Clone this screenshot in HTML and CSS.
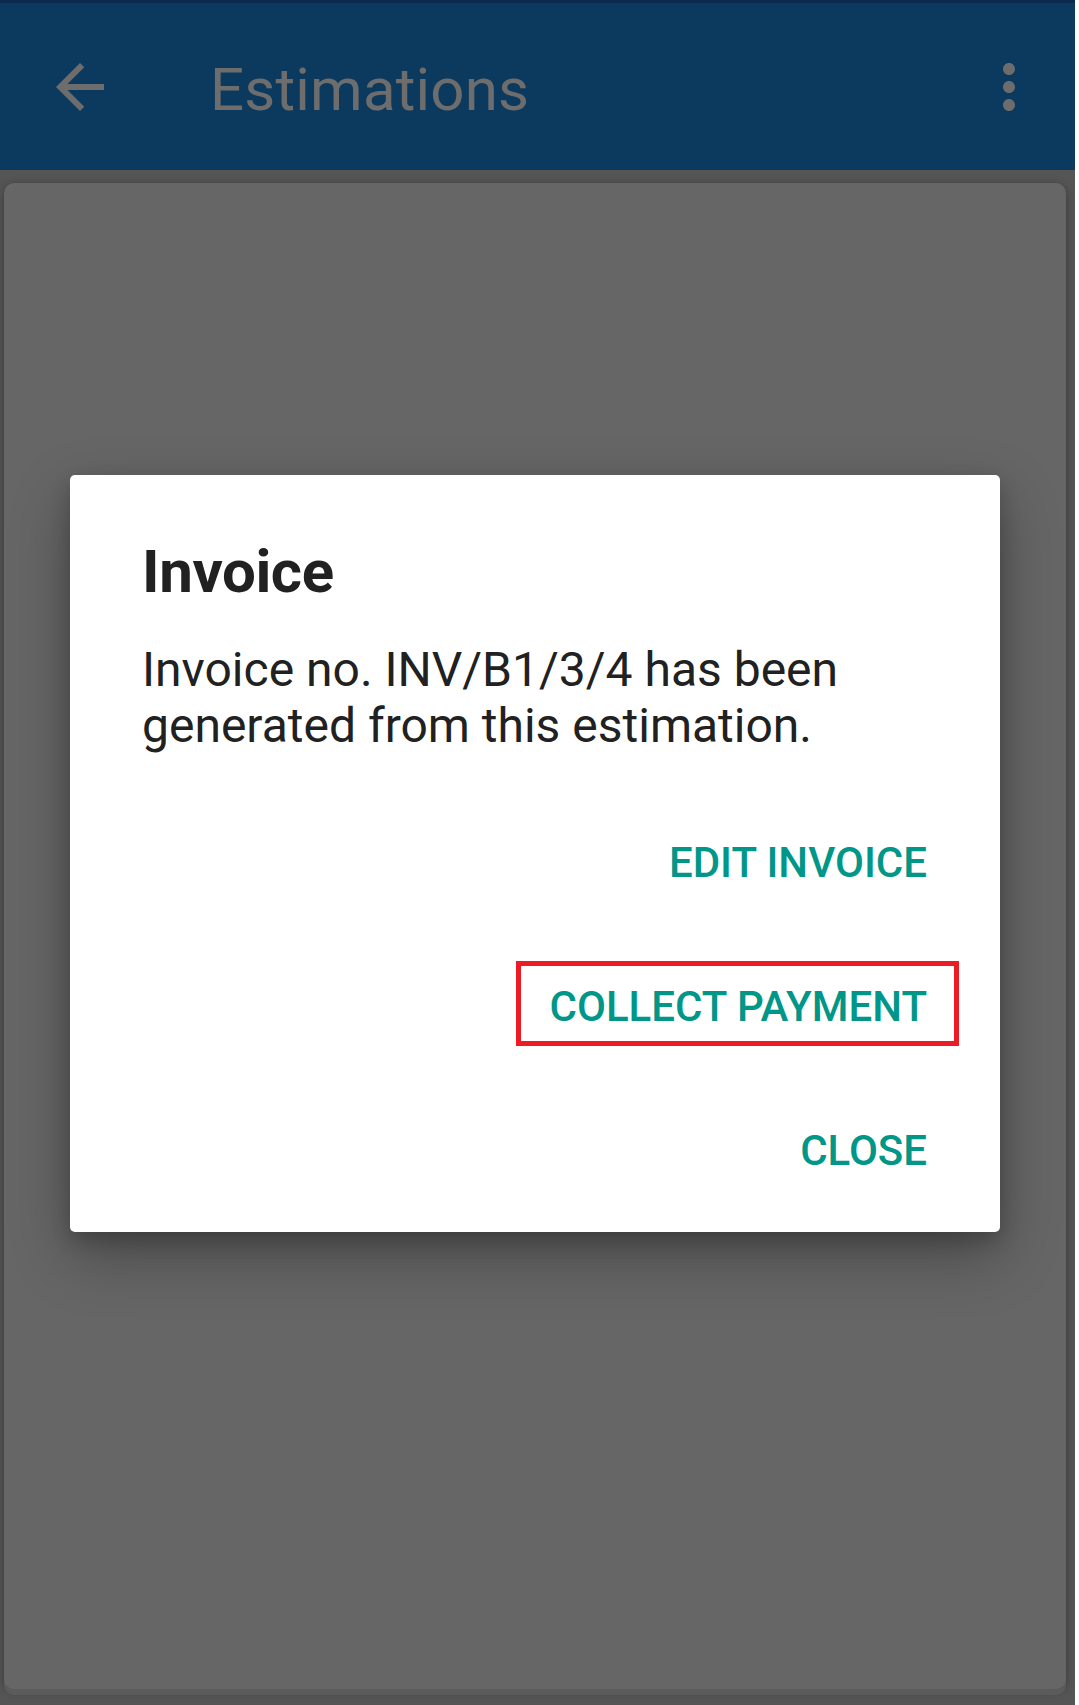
FILE: index.html
```html
<!DOCTYPE html>
<html lang="en">
<head>
    <meta charset="UTF-8">
    <meta name="viewport" content="width=device-width, initial-scale=1.0">
    <title>Estimations</title>
    <link rel="stylesheet" href="styles.css">
</head>
<body>
    <div class="screen">
        <div class="appbar">
            <svg class="icon" viewBox="0 0 24 24"><path d="M20 11H7.830l5.590-5.590L12 4l-8 8 8 8 1.410-1.410L7.830 13H20v-2z"/></svg>
            <h1>Estimations</h1>
            <svg class="icon menu" viewBox="0 0 24 24"><path d="M12 8c1.1 0 2-.9 2-2s-.9-2-2-2-2 .9-2 2 .9 2 2 2zm0 2c-1.1 0-2 .9-2 2s.9 2 2 2 2-.9 2-2-.9-2-2-2zm0 6c-1.1 0-2 .9-2 2s.9 2 2 2 2-.9 2-2-.9-2-2-2z"/></svg>
        </div>

        <div class="content">
            <div class="card"></div>
        </div>

        <!-- Invoice dialog over the dimmed screen -->
        <div class="dialog">
            <h2>Invoice</h2>
            <p>Invoice no. INV/B1/3/4 has been generated from this estimation.</p>
            <div class="actions">
                <button>EDIT INVOICE</button>
                <button class="marked">COLLECT PAYMENT</button>
                <button>CLOSE</button>
            </div>
        </div>
    </div>
</body>
</html>
```

FILE: styles.css
```css
body, html {
    margin: 0;
    padding: 0;
    background: #fff;
    font-family: Roboto, "Noto Sans", sans-serif;
}

.screen {
    position: relative;
    width: 1075px;
    height: 1705px;
    display: flex;
    flex-direction: column;
    overflow: hidden;
}

.appbar {
    height: 167px;
    border-top: 3px solid #0a2b4e;
    background-color: #0c3a5f;
    display: flex;
    align-items: center;
    padding: 0 30px 0 44px;
    color: #6d6d6d;
}

    .appbar .icon {
        width: 72px;
        height: 72px;
        fill: #6d6d6d;
        flex: none;
    }

    .appbar h1 {
        margin: 6px 0 0 94px;
        font-size: 60px;
        line-height: 70px;
        font-weight: 400;
        letter-spacing: 0.2px;
    }

    .appbar .menu {
        margin-left: auto;
    }

.content {
    flex: 1;
    background-color: #555;
    padding: 13px 9px 16px 4px;
    display: flex;
}

.card {
    flex: 1;
    background-color: #666;
    border-radius: 10px;
    box-shadow: 0 6px 0 #5b5b5b, 0 2px 8px rgba(0, 0, 0, 0.35);
}

.dialog {
    position: absolute;
    left: 70px;
    top: 475px;
    width: 930px;
    box-sizing: border-box;
    padding: 62px 41px 42px 72px;
    background-color: #fff;
    border-radius: 5px;
    box-shadow: 0 24px 60px rgba(0, 0, 0, 0.3), 0 8px 20px rgba(0, 0, 0, 0.2);
    color: #212121;
}

    .dialog h2 {
        margin: 0;
        font-size: 60px;
        line-height: 70px;
        font-weight: 700;
        letter-spacing: -0.4px;
    }

    .dialog p {
        margin: 35px 0 0;
        font-size: 48px;
        line-height: 56px;
        padding-right: 20px;
    }

.actions {
    display: flex;
    flex-direction: column;
    align-items: flex-end;
    gap: 59px;
    margin-top: 63px;
}

    .actions button {
        font-family: Roboto, "Noto Sans", sans-serif;
        font-size: 42px;
        font-weight: 500;
        line-height: 69px;
        padding: 6px 27px 0 29px;
        border: 5px solid transparent;
        background: none;
        color: #009688;
        cursor: pointer;
    }

    .actions .marked {
        border-color: #ed1c24;
    }
```
